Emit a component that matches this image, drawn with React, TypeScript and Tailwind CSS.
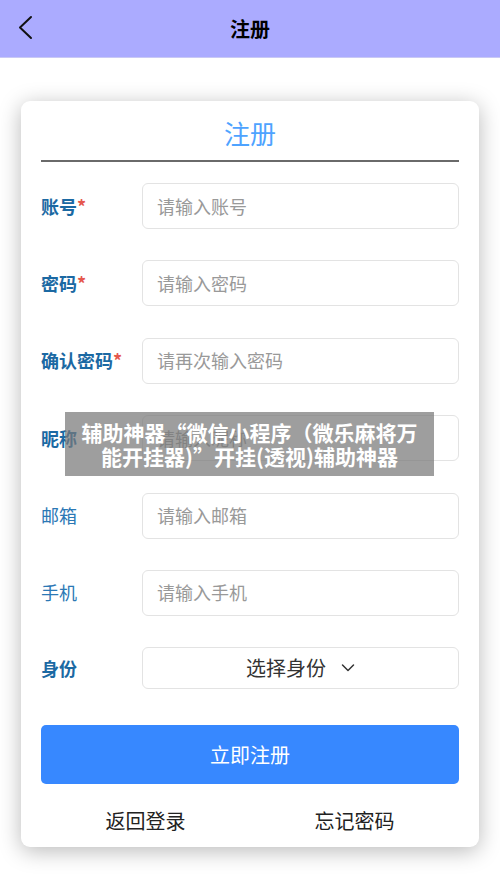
const rows = [
  { label: "账号", required: true, bold: true, placeholder: "请输入账号" },
  { label: "密码", required: true, bold: true, placeholder: "请输入密码" },
  { label: "确认密码", required: true, bold: true, placeholder: "请再次输入密码" },
  { label: "昵称", required: false, bold: true, placeholder: "请输入昵称" },
  { label: "邮箱", required: false, bold: false, placeholder: "请输入邮箱" },
  { label: "手机", required: false, bold: false, placeholder: "请输入手机" },
];

const App = () => {
  return (
    <div className="relative min-h-[889px] bg-white font-['Noto_Sans_CJK_SC',sans-serif]">
      <header className="relative flex h-[58px] items-center justify-center border-b border-[#c9c9f5] bg-[#ababff]">
        <svg
          className="absolute left-[17px] top-[15px]"
          width="18"
          height="26"
          viewBox="0 0 18 26"
          fill="none"
        >
          <polyline
            points="14,2 3,12.5 14,23"
            stroke="#111"
            strokeWidth="2"
            strokeLinecap="round"
            strokeLinejoin="round"
          />
        </svg>
        <h1 className="text-[20px] font-bold text-black">注册</h1>
      </header>

      <main className="px-[21px] pt-[43px] pb-[43px]">
        <div className="rounded-[9px] bg-white px-[20px] shadow-[0_4px_22px_rgba(0,0,0,0.28)]">
          <div className="border-b-2 border-[#6a6a6a] pt-[14px] pb-[9px] text-center text-[26px] leading-[36px] text-[#4ea3ff]">
            注册
          </div>

          <div className="flex flex-col gap-[31.4px] pt-[21px]">
            {rows.map((row) => (
              <div key={row.label} className="flex items-center">
                <div
                  className={
                    row.bold
                      ? "w-[101px] text-[18px] font-bold text-[#1b69a3]"
                      : "w-[101px] text-[18px] text-[#2b78b5]"
                  }
                >
                  {row.label}
                  {row.required && <span className="text-[#e5574d]">*</span>}
                </div>
                <div className="flex h-[46px] flex-1 items-center rounded-[6px] border border-[#e3e3e3] bg-white pl-[14px] text-[18px] text-[#999]">
                  {row.placeholder}
                </div>
              </div>
            ))}

            <div className="flex items-center">
              <div className="w-[101px] text-[18px] font-bold text-[#1b69a3]">身份</div>
              <div className="flex h-[42px] flex-1 items-center justify-center gap-[15px] rounded-[6px] border border-[#e3e3e3] bg-white text-[20px] text-[#333]">
                <span>选择身份</span>
                <svg width="14" height="10" viewBox="0 0 14 10" fill="none">
                  <polyline
                    points="1.5,2 7,7.5 12.5,2"
                    stroke="#333"
                    strokeWidth="1.5"
                    strokeLinecap="round"
                    strokeLinejoin="round"
                  />
                </svg>
              </div>
            </div>
          </div>

          <button className="mt-[36px] flex h-[59px] w-full items-center justify-center rounded-[5px] bg-[#3788ff] text-[20px] text-white">
            立即注册
          </button>

          <div className="flex pt-[23px] pb-[12px] text-[20px] leading-[28px] text-[#222]">
            <div className="flex-1 text-center">返回登录</div>
            <div className="flex-1 text-center">忘记密码</div>
          </div>
        </div>
      </main>

      <div className="absolute left-[65px] top-[412px] h-[64px] w-[369px] bg-[rgba(120,120,120,0.72)] px-[10px] pt-[8px] text-center text-[21px] font-bold leading-[24px] text-white">
        辅助神器“微信小程序（微乐麻将万能开挂器)”开挂(透视)辅助神器
      </div>
    </div>
  );
};

export default App;
